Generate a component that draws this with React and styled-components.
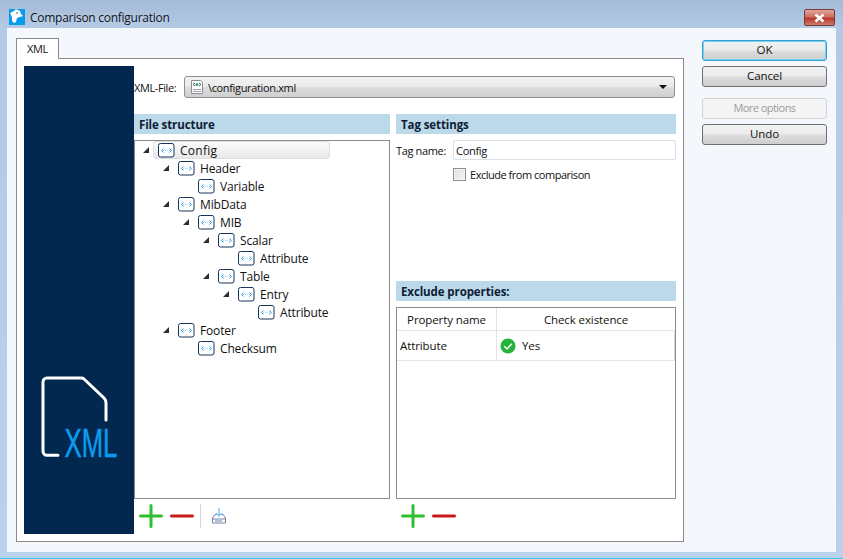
import React from "react";
import styled, { createGlobalStyle } from "styled-components";

const Global = createGlobalStyle`
  html, body { margin: 0; padding: 0; background: #b9d1ea; }
  * { box-sizing: border-box; }
  body { font-family: "Open Sans", "Noto Sans", "Liberation Sans", sans-serif; font-size: 12px; color: #111; }
`;

const Win = styled.div`
  width: 843px; height: 559px; display: flex; flex-direction: column; overflow: hidden;
  background: linear-gradient(180deg, #a4bad6 0, #b3cae4 28px, #b9d1ea 100%);
  border-bottom: 1px solid #2fd0ee;
`;
const TitleBar = styled.div`
  height: 28px; flex: none; display: flex; align-items: center; padding: 6px 8px 0 9px; gap: 5px;
`;
const TitleText = styled.div`
  font-size: 12px; letter-spacing: -0.27px; color: #10131c; flex: 1; text-shadow: 0 0 6px rgba(255,255,255,.45);
`;
const CloseBtn = styled.div`
  width: 31px; height: 17px; margin-top: 1px; border: 1px solid #7a3a3a; border-radius: 2px;
  background: linear-gradient(180deg, #dfa79c 0, #cf6e5e 45%, #b9392c 55%, #cb7a6c 100%);
  display: flex; align-items: center; justify-content: center;
`;
const Client = styled.div`
  flex: 1; margin: 0 7px 6px 7px; background: #f4f7fc; display: flex; padding: 10px 9px 10px 9px; gap: 18px;
`;
const TabArea = styled.div`
  width: 668px; display: flex; flex-direction: column;
`;
const TabStrip = styled.div`
  height: 20px; flex: none; display: flex; position: relative; z-index: 1;
`;
const Tab = styled.div`
  width: 43px; height: 21px; background: #fff; border: 1px solid #8a8a8a; border-bottom: none;
  font-size: 11px; padding: 2px 0 0 10px; letter-spacing: -0.4px;
`;
const TabPanel = styled.div`
  flex: 1; background: #fff; border: 1px solid #8a8a8a; padding: 7px; display: flex;
`;
const Side = styled.div`
  width: 110px; flex: none; background: #02284f; display: flex; flex-direction: column;
  justify-content: flex-end; padding: 0 0 64px 17px;
`;
const Main = styled.div`
  width: 542px; flex: none; display: flex; flex-direction: column; padding-top: 10px;
`;
const FileRow = styled.div`
  display: flex; align-items: center; height: 22px; margin-bottom: 16px;
`;
const FileLabel = styled.div`
  width: 50px; flex: none; letter-spacing: -0.4px; font-size: 11px;
`;
const Combo = styled.div`
  flex: none; width: 491px; height: 22px; border: 1px solid #8e8f8f; border-radius: 3px;
  background: linear-gradient(180deg, #f2f2f2 0, #ebebeb 48%, #dddddd 52%, #cfcfcf 100%);
  display: flex; align-items: center; padding: 0 7px 0 4px; gap: 3px; font-size: 11px; letter-spacing: -0.35px;
`;
const ComboText = styled.span`flex: 1;`;
const Caret = styled.span`
  width: 0; height: 0; border-left: 4px solid transparent; border-right: 4px solid transparent; border-top: 4px solid #111;
`;
const Columns = styled.div`
  flex: 1; display: flex; gap: 6px;
`;
const Col = styled.div`
  width: ${p => p.$w}px; flex: none; display: flex; flex-direction: column;
`;
const Section = styled.div`
  height: 20px; flex: none; background: #bcd9ea; color: #0e2036; font-weight: 700; font-size: 11.5px;
  letter-spacing: -0.1px; padding: 3px 0 0 5px;
`;
const TreeBox = styled.div`
  margin-top: 6px; height: 359px; flex: none; border: 1px solid #8c8c8c; background: #fff;
`;
const TreeRow = styled.div`
  height: 18px; display: flex; align-items: center; padding-left: ${p => 8 + p.$level * 20}px;
`;
const Arrow = styled.span`
  width: 0; height: 0; flex: none; margin-right: 8px;
  border-style: solid; border-width: 0 0 6px 6px;
  border-color: transparent transparent ${p => (p.$hide ? "transparent" : "#2e2e2e")} transparent;
`;
const NodeWrap = styled.span`
  display: flex; align-items: center; gap: 5px; height: 18px; padding: 0 0 0 4px; margin-left: -4px;
  width: ${p => (p.$sel ? "177px" : "auto")}; border-radius: 3px;
  ${p => p.$sel ? "border: 1px solid #dedede; background: linear-gradient(180deg,#fbfbfb,#e8e8e8);" : "border: 1px solid transparent;"}
  letter-spacing: ${p => (p.$sel ? "0.25px" : "-0.15px")};
`;
const ToolBar = styled.div`
  height: 34px; flex: none; display: flex; align-items: center; padding: 0 0 0 5px; gap: 7px;
`;
const Divider = styled.span`
  width: 1px; height: 24px; background: #d0d4d9; margin: 0 2px 0 -1px;
`;
const TagRow = styled.div`
  display: flex; align-items: center; height: 20px; margin-top: 6px;
`;
const TagLabel = styled.div`
  width: 57px; flex: none; letter-spacing: -0.35px; font-size: 11px;
`;
const TagInput = styled.div`
  flex: 1; height: 20px; border: 1px solid #dcdfe3; border-radius: 2px; padding: 2px 0 0 2px; letter-spacing: -0.3px; font-size: 11px;
`;
const CheckRow = styled.div`
  display: flex; align-items: center; gap: 4px; margin: 6px 0 0 57px; height: 16px; letter-spacing: -0.48px; font-size: 11px;
`;
const CheckBox = styled.span`
  width: 13px; height: 13px; border: 1px solid #8e8f8f; background: linear-gradient(135deg,#dedede,#f6f6f6); box-shadow: inset 0 0 0 1px #f4f4f4;
`;
const Gap = styled.div`flex: none; height: ${p => p.$h}px;`;
const Table = styled.div`
  margin-top: 6px; height: 192px; flex: none; border: 1px solid #8c8c8c; background: #fff;
`;
const HeadRow = styled.div`
  display: flex; height: 23px; background: #fff; border-bottom: 1px solid #e6e6e6;
`;
const BodyRow = styled.div`
  display: flex; height: 30px; border-bottom: 1px solid #e6e6e6; border-right: 1px solid #d9d9d9;
`;
const Cell = styled.div`
  width: ${p => p.$w}px; flex: ${p => (p.$w ? "none" : 1)}; display: flex; align-items: center; gap: 6px;
  justify-content: ${p => (p.$center ? "center" : "flex-start")};
  padding-left: ${p => (p.$pad || 0)}px; font-size: 11.5px; letter-spacing: -0.1px;
  ${p => p.$line ? "border-right: 1px solid #e3e3e3;" : ""}
`;
const Buttons = styled.div`
  width: 125px; flex: none; display: flex; flex-direction: column; padding-top: 2px;
`;
const Btn = styled.div`
  height: 21px; flex: none; display: flex; align-items: center; justify-content: center; border-radius: 3px;
  margin-top: ${p => p.$mt || 0}px; padding-bottom: 2px; font-size: ${p => (p.$off ? "11px" : "11.5px")};
  letter-spacing: ${p => (p.$off ? "-0.55px" : "-0.1px")};
  border: 1px solid ${p => (p.$off ? "#d4d4d4" : p.$def ? "#3c9ccb" : "#707070")};
  color: ${p => (p.$off ? "#9a9a9a" : "#111")};
  background: ${p => (p.$off ? "#f4f4f4" : "linear-gradient(180deg,#f2f2f2 0,#ebebeb 48%,#dddddd 52%,#cfcfcf 100%)")};
  ${p => p.$def ? "box-shadow: inset 0 0 0 1px #6fd3f3;" : ""}
`;

const TagIcon = () => (
  <svg width="17" height="15" viewBox="0 0 17 15" style={{ flex: "none" }}>
    <rect x="0.5" y="0.5" width="15.5" height="13.5" rx="2" fill="#fff" stroke="#16355a" />
    <path d="M5 7.5h7" stroke="#a9d2ee" strokeDasharray="1 1" />
    <path d="M5.5 5.5 3.5 7.5l2 2M11.5 5.5l2 2-2 2" fill="none" stroke="#1d9be8" />
  </svg>
);

const Plus = () => (
  <svg width="24" height="24" viewBox="0 0 24 24" style={{ flex: "none" }}>
    <path d="M1.5 12h21M12 1.5v21" stroke="#2fc032" strokeWidth="3" strokeLinecap="round" />
  </svg>
);
const Minus = () => (
  <svg width="24" height="24" viewBox="0 0 24 24" style={{ flex: "none" }}>
    <path d="M1.5 12h21" stroke="#c81a1a" strokeWidth="3" strokeLinecap="round" />
  </svg>
);

const Logo = () => (
  <svg width="90" height="94" viewBox="0 0 90 94">
    <path d="M17 79.3H6a4 4 0 0 1-4-4V6a4 4 0 0 1 4-4H40q2 0 3 1L63 22q2 2 2 5V44" fill="none" stroke="#fff" strokeWidth="3" strokeLinecap="round" />
    <text transform="translate(23.5 80.7) scale(0.62 1)" fontFamily="'Liberation Sans', sans-serif" fontSize="41.5" fill="#0a9bee" stroke="#0a9bee" strokeWidth="0.5">XML</text>
  </svg>
);

const tree = [
  ["Config", 0, true], ["Header", 1, true], ["Variable", 2, false], ["MibData", 1, true], ["MIB", 2, true],
  ["Scalar", 3, true], ["Attribute", 4, false], ["Table", 3, true], ["Entry", 4, true], ["Attribute", 5, false],
  ["Footer", 1, true], ["Checksum", 2, false],
];

export default function App() {
  return (
    <Win>
      <Global />
      <TitleBar>
        <svg width="16" height="16" viewBox="0 0 16 16" style={{ flex: "none" }}>
          <rect width="16" height="16" fill="#0a9bee" />
          <path d="M1 4 5 2l2-2 4 2 1 3 2 2-3 1-3 1-1 4-2 1-2-2V8z" fill="#fff" />
          <circle cx="8" cy="4" r="0.8" fill="#0a4f7a" />
        </svg>
        <TitleText>Comparison configuration</TitleText>
        <CloseBtn>
          <svg width="13" height="10" viewBox="0 0 13 10">
            <path d="M2.5 1.5 10.5 8.5M10.5 1.5 2.5 8.5" stroke="#fff" strokeWidth="2.6" />
          </svg>
        </CloseBtn>
      </TitleBar>
      <Client>
        <TabArea>
          <TabStrip><Tab>XML</Tab></TabStrip>
          <TabPanel>
            <Side><Logo /></Side>
            <Main>
              <FileRow>
                <FileLabel>XML-File:</FileLabel>
                <Combo>
                  <svg width="16" height="16" viewBox="0 0 16 16" style={{ flex: "none" }}>
                    <path d="M2.5 1.5h9l2 2v11h-11z" fill="#fff" stroke="#8a8f96" />
                    <path d="M4 10.5h8M4 12.5h8" stroke="#9aa0a8" />
                    <path d="M6 4 4 5.5 6 7M10 4l2 1.5L10 7" fill="none" stroke="#555" />
                    <circle cx="8" cy="5.5" r="1.5" fill="#2aa58a" />
                  </svg>
                  <ComboText>\configuration.xml</ComboText>
                  <Caret />
                </Combo>
              </FileRow>
              <Columns>
                <Col $w={256}>
                  <Section>File structure</Section>
                  <TreeBox>
                    {tree.map(([name, level, open], i) => (
                      <TreeRow key={i} $level={level}>
                        <Arrow $hide={!open} />
                        <NodeWrap $sel={i === 0}><TagIcon />{name}</NodeWrap>
                      </TreeRow>
                    ))}
                  </TreeBox>
                  <ToolBar>
                    <Plus /><Minus />
                    <Divider />
                    <svg width="18" height="18" viewBox="0 0 18 18" style={{ flex: "none" }}>
                      <path d="M2.5 11 5 7.5h8l2.5 3.5v5h-13z" fill="#fff" stroke="#6f86a8" />
                      <path d="M2.5 12h13" stroke="#6f86a8" />
                      <path d="M5 14h7" stroke="#6f86a8" />
                      <path d="M9 1v8M6 6l3 3 3-3" fill="none" stroke="#8ccbf5" strokeWidth="1.5" />
                    </svg>
                  </ToolBar>
                </Col>
                <Col $w={280}>
                  <Section>Tag settings</Section>
                  <TagRow>
                    <TagLabel>Tag name:</TagLabel>
                    <TagInput>Config</TagInput>
                  </TagRow>
                  <CheckRow><CheckBox />Exclude from comparison</CheckRow>
                  <Gap $h={99} />
                  <Section>Exclude properties:</Section>
                  <Table>
                    <HeadRow>
                      <Cell $w={100} $center $line>Property name</Cell>
                      <Cell $center>Check existence</Cell>
                    </HeadRow>
                    <BodyRow>
                      <Cell $w={100} $pad={3} $line>Attribute</Cell>
                      <Cell $pad={3}>
                        <svg width="16" height="16" viewBox="0 0 17 17" style={{ flex: "none" }}>
                          <circle cx="8.5" cy="8.5" r="8" fill="#25b33a" />
                          <path d="M4.5 8.7 7.4 11.6 12.5 6" fill="none" stroke="#fff" strokeWidth="1.6" />
                        </svg>
                        Yes
                      </Cell>
                    </BodyRow>
                  </Table>
                  <ToolBar><Plus /><Minus /></ToolBar>
                </Col>
              </Columns>
            </Main>
          </TabPanel>
        </TabArea>
        <Buttons>
          <Btn $def>OK</Btn>
          <Btn $mt={5}>Cancel</Btn>
          <Btn $mt={11} $off>More options</Btn>
          <Btn $mt={5}>Undo</Btn>
        </Buttons>
      </Client>
    </Win>
  );
}
